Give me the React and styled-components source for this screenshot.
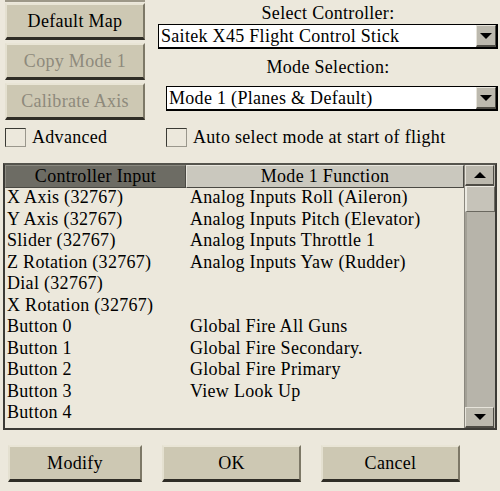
import React from "react";
import styled, { createGlobalStyle, ThemeProvider } from "styled-components";

const theme = {
  font: '"Liberation Serif", "Times New Roman", Times, serif',
  face: "#cdc8b3",
  page: "#ece8dc",
};

const Global = createGlobalStyle`
  html, body { margin: 0; padding: 0; }
  body { font-family: ${({ theme }) => theme.font}; }
`;

const Panel = styled.div`
  width: 500px;
  min-height: 491px;
  background: ${({ theme }) => theme.page};
  color: #000;
  font-family: ${({ theme }) => theme.font};
  font-size: 18px;
  letter-spacing: 0.3px;
`;

const Top = styled.div`
  display: flex;
  gap: 13px;
  padding: 0 2px 0 5px;
`;

const LeftCol = styled.div`
  width: 140px;
  display: flex;
  flex-direction: column;
  gap: 3px;
`;

const CutEdge = styled.div`
  height: 0;
  border-bottom: 2px solid #9d9888;
  margin-bottom: -2px;
`;

const Button = styled.div`
  box-sizing: border-box;
  height: 37px;
  display: flex;
  align-items: center;
  justify-content: center;
  font-family: ${({ theme }) => theme.font};
  background: ${({ theme }) => theme.face};
  border-top: 2px solid #e9e5d6;
  border-left: 2px solid #e4e0d0;
  border-right: 2px solid #7d7867;
  border-bottom: 3px solid #2f2d26;
  color: ${({ $disabled }) => ($disabled ? "#8e8a7c" : "#000")};
  white-space: nowrap;
`;

const RightCol = styled.div`
  flex: 1;
  display: flex;
  flex-direction: column;
  padding-top: 3px;
`;

const Label = styled.div`
  height: ${({ $h }) => $h}px;
  display: flex;
  align-items: center;
  justify-content: center;
  font-family: ${({ theme }) => theme.font};
`;

const Select = styled.div`
  box-sizing: border-box;
  height: 25px;
  margin-left: ${({ $indent }) => $indent || 0}px;
  display: flex;
  align-items: center;
  background: #fff;
  border: 1px solid #000;
  border-right-width: 2px;
  border-bottom-width: 2px;
  padding-left: 2px;
`;

const SelectText = styled.span`
  flex: 1;
  white-space: nowrap;
  font-family: ${({ theme }) => theme.font};
`;

const ArrowButton = styled.div`
  box-sizing: border-box;
  width: ${({ $w }) => $w || 20}px;
  height: ${({ $h }) => $h || 22}px;
  display: flex;
  align-items: center;
  justify-content: center;
  background: #bcb9ae;
  border-top: 1px solid #e6e3da;
  border-left: 1px solid #e6e3da;
  border-right: 1px solid #4f4d46;
  border-bottom: 2px solid #4f4d46;
`;

const Triangle = styled.span`
  width: 0;
  height: 0;
  border-left: 6px solid transparent;
  border-right: 6px solid transparent;
  border-top: ${({ $up }) => ($up ? "0" : "6px solid #000")};
  border-bottom: ${({ $up }) => ($up ? "6px solid #000" : "0")};
`;

const CheckRow = styled.div`
  display: flex;
  align-items: center;
  padding-left: 5px;
  margin-top: 7px;
  height: 20px;
`;

const CheckItem = styled.div`
  display: flex;
  align-items: center;
  gap: 6px;
  width: ${({ $w }) => ($w ? `${$w}px` : "auto")};
  white-space: nowrap;
  font-family: ${({ theme }) => theme.font};
`;

const Box = styled.span`
  box-sizing: border-box;
  width: 21px;
  height: 19px;
  border: 1px solid #3a3a34;
  border-right-color: #9a978c;
  border-bottom-color: #9a978c;
`;

const List = styled.div`
  box-sizing: border-box;
  margin: 16px 3px 0 3px;
  height: 267px;
  display: flex;
  border: 2px solid #3c3b36;
  border-top-color: #55544d;
`;

const Table = styled.div`
  flex: 1;
  display: flex;
  flex-direction: column;
`;

const HeaderRow = styled.div`
  display: grid;
  grid-template-columns: 181px 1fr;
  height: 21px;
`;

const HeaderCell = styled.div`
  box-sizing: border-box;
  display: flex;
  align-items: center;
  justify-content: center;
  font-family: ${({ theme }) => theme.font};
  background: ${({ $dark }) => ($dark ? "#6d6c64" : "#cac8be")};
  border-top: 1px solid ${({ $dark }) => ($dark ? "#8a8980" : "#e9e7df")};
  border-left: 1px solid ${({ $dark }) => ($dark ? "#8a8980" : "#e9e7df")};
  border-bottom: 1px solid #4a4943;
  border-right: 1px solid #4a4943;
`;

const Row = styled.div`
  display: grid;
  grid-template-columns: 183px 1fr;
  height: 21.5px;
  line-height: 23px;
  white-space: nowrap;
`;

const Cell = styled.div`
  padding-left: 2px;
  font-family: ${({ theme }) => theme.font};
`;

const Scrollbar = styled.div`
  width: 30px;
  display: flex;
  flex-direction: column;
  background: #b7b4aa;
  border-left: 1px solid #8a877e;
`;

const Thumb = styled.div`
  box-sizing: border-box;
  height: 26px;
  background: #c6c3b9;
  border-top: 1px solid #eceae2;
  border-left: 2px solid #eceae2;
  border-right: 1px solid #6a685f;
  border-bottom: 1px solid #6a685f;
`;

const Track = styled.div`
  flex: 1;
  border-left: 2px solid #a3a096;
`;

const Footer = styled.div`
  display: grid;
  grid-template-columns: 134px 139px 139px;
  column-gap: 20px;
  padding: 15px 0 0 8px;
`;

const rows = [
  ["X Axis (32767)", "Analog Inputs Roll (Aileron)"],
  ["Y Axis (32767)", "Analog Inputs Pitch (Elevator)"],
  ["Slider (32767)", "Analog Inputs Throttle 1"],
  ["Z Rotation (32767)", "Analog Inputs Yaw (Rudder)"],
  ["Dial (32767)", ""],
  ["X Rotation (32767)", ""],
  ["Button 0", "Global Fire All Guns"],
  ["Button 1", "Global Fire Secondary."],
  ["Button 2", "Global Fire Primary"],
  ["Button 3", "View Look Up"],
  ["Button 4", ""],
];

export default function App() {
  return (
    <ThemeProvider theme={theme}>
      <Global />
      <Panel>
        <Top>
          <LeftCol>
            <CutEdge />
            <Button>Default Map</Button>
            <Button $disabled>Copy Mode 1</Button>
            <Button $disabled>Calibrate Axis</Button>
          </LeftCol>
          <RightCol>
            <Label $h={21}>Select Controller:</Label>
            <Select>
              <SelectText>Saitek X45 Flight Control Stick</SelectText>
              <ArrowButton>
                <Triangle />
              </ArrowButton>
            </Select>
            <Label $h={37}>Mode Selection:</Label>
            <Select $indent={8}>
              <SelectText>Mode 1 (Planes &amp; Default)</SelectText>
              <ArrowButton>
                <Triangle />
              </ArrowButton>
            </Select>
          </RightCol>
        </Top>
        <CheckRow>
          <CheckItem $w={161}>
            <Box />
            Advanced
          </CheckItem>
          <CheckItem>
            <Box />
            Auto select mode at start of flight
          </CheckItem>
        </CheckRow>
        <List>
          <Table>
            <HeaderRow>
              <HeaderCell $dark>Controller Input</HeaderCell>
              <HeaderCell>Mode 1 Function</HeaderCell>
            </HeaderRow>
            {rows.map(([input, fn]) => (
              <Row key={input}>
                <Cell>{input}</Cell>
                <Cell>{fn}</Cell>
              </Row>
            ))}
          </Table>
          <Scrollbar>
            <ArrowButton $w={29} $h={21}>
              <Triangle $up />
            </ArrowButton>
            <Thumb />
            <Track />
            <ArrowButton $w={29} $h={21}>
              <Triangle />
            </ArrowButton>
          </Scrollbar>
        </List>
        <Footer>
          <Button>Modify</Button>
          <Button>OK</Button>
          <Button>Cancel</Button>
        </Footer>
      </Panel>
    </ThemeProvider>
  );
}
